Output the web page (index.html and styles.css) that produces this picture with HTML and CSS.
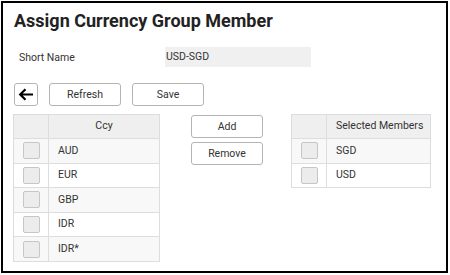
FILE: index.html
```html
<!DOCTYPE html>
<html lang="en">
<head>
  <meta charset="UTF-8">
  <title>Assign Currency Group Member</title>
  <link rel="stylesheet" href="styles.css">
</head>
<body>

<div class="frame">
  <h1 class="title">Assign Currency Group Member</h1>

  <div class="field-row">
    <label class="field-label">Short Name</label>
    <div class="field-value">USD-SGD</div>
  </div>

  <div class="toolbar">
    <button class="btn btn-back" title="Back">
      <svg width="16" height="13" viewBox="0 0 16 13">
        <path d="M15 6.5H2.5 M7.5 1.3L2.2 6.5l5.3 5.2" fill="none" stroke="#000" stroke-width="2.2"/>
      </svg>
    </button>
    <button class="btn btn-wide">Refresh</button>
    <button class="btn btn-wide">Save</button>
  </div>

  <div class="main">
    <table class="grid grid-left">
      <thead>
        <tr><th class="chk-col"></th><th>Ccy</th></tr>
      </thead>
      <tbody>
        <tr><td class="chk-col"><span class="chk"></span></td><td>AUD</td></tr>
        <tr><td class="chk-col"><span class="chk"></span></td><td>EUR</td></tr>
        <tr><td class="chk-col"><span class="chk"></span></td><td>GBP</td></tr>
        <tr><td class="chk-col"><span class="chk"></span></td><td>IDR</td></tr>
        <tr><td class="chk-col"><span class="chk"></span></td><td>IDR*</td></tr>
      </tbody>
    </table>

    <div class="actions">
      <button class="btn btn-wide">Add</button>
      <button class="btn btn-wide">Remove</button>
    </div>

    <table class="grid grid-right">
      <thead>
        <tr><th class="chk-col"></th><th>Selected Members</th></tr>
      </thead>
      <tbody>
        <tr><td class="chk-col"><span class="chk"></span></td><td>SGD</td></tr>
        <tr><td class="chk-col"><span class="chk"></span></td><td>USD</td></tr>
      </tbody>
    </table>
  </div>
</div>

</body>
</html>
```

FILE: styles.css
```css
body {
  margin: 0;
  font-family: Roboto, "Liberation Sans", Arial, sans-serif;
  font-size: 10.5px;
  color: #333;
  background: #fff;
}

.frame {
  box-sizing: border-box;
  width: 447px;
  height: 272px;
  margin: 1px 0 0 1px;
  border: 2px solid #000;
  padding: 0 10px;
}

.title {
  margin: 0;
  padding: 6px 0 0 1px;
  height: 30px;
  font-size: 18px;
  font-weight: bold;
  line-height: 24px;
  color: #222;
}

.field-row {
  display: flex;
  align-items: center;
  margin-top: 8px;
  height: 20px;
}

.field-label {
  width: 146px;
  padding-left: 6px;
}

.field-value {
  width: 145px;
  height: 20px;
  line-height: 20px;
  padding-left: 1px;
  background-color: #f0f0f0;
  color: #333;
}

.toolbar {
  display: flex;
  gap: 11px;
  margin-top: 16px;
  padding-left: 1px;
}

.btn {
  box-sizing: border-box;
  height: 23px;
  padding: 0;
  background: #fff;
  border: 1px solid #b4b4b4;
  border-radius: 3px;
  font-family: inherit;
  font-size: 10.5px;
  color: #333;
  cursor: pointer;
}

.btn-back {
  width: 24px;
  display: flex;
  align-items: center;
  justify-content: center;
}

.btn-wide {
  width: 72px;
}

.main {
  display: flex;
  align-items: flex-start;
  margin-top: 8px;
}

.grid {
  border-collapse: collapse;
  table-layout: fixed;
}

.grid th,
.grid td {
  border: 1px solid #ddd;
  padding: 0 9px;
  font-weight: normal;
  text-align: left;
  white-space: nowrap;
  line-height: 1;
}

.grid th {
  height: 23px;
  background-color: #efefef;
  text-align: center;
}

.grid td {
  height: 23.6px;
}

.grid tbody tr:nth-child(odd) td {
  background-color: #f8f8f8;
}

.grid .chk-col {
  width: 34px;
  padding: 0;
  text-align: center;
}

.chk {
  display: inline-block;
  box-sizing: border-box;
  width: 17px;
  height: 17px;
  vertical-align: middle;
  background-color: #ececec;
  border: 1px solid #c6c6c6;
  border-radius: 2px;
}

.grid-left {
  width: 147px;
}

.grid-right {
  width: 140px;
}

.actions {
  display: flex;
  flex-direction: column;
  gap: 4px;
  margin: 1px 28px 0 31px;
}
```
